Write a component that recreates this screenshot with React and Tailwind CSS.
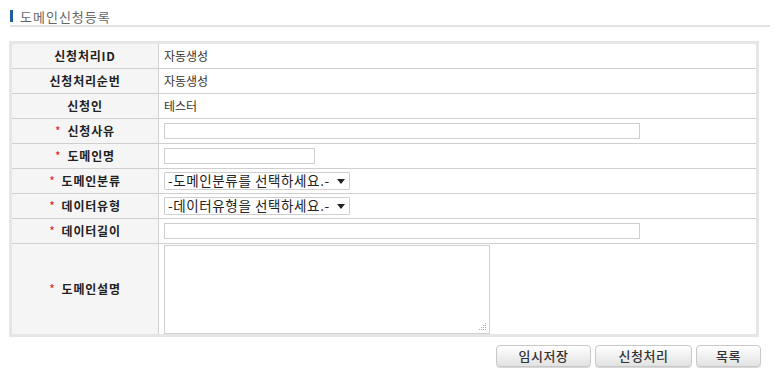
import React from "react";

const font = { fontFamily: '"Noto Sans CJK KR", "Noto Sans", sans-serif' };

function Row({ label, req, children, tall, last }) {
  return (
    <div className={`flex ${last ? "" : "border-b border-[#cfcfcf]"} ${tall ? "h-[90px]" : "h-[25px]"}`}>
      <div className="w-[147px] shrink-0 bg-[#f5f5f5] border-r border-[#cfcfcf] flex items-center justify-center text-[12px] font-bold text-[#222] tracking-[0.8px]">
        {req && <span className="text-[#e02020] mr-[6px] font-normal">*</span>}
        {label}
      </div>
      <div className={`flex-1 flex ${tall ? "items-start pt-[1px]" : "items-center"} pl-[5px] text-[12px] text-[#333]`}>
        {children}
      </div>
    </div>
  );
}

function Select({ text }) {
  return (
    <div className="w-[186px] h-[18px] border border-[#cfcfcf] bg-white flex items-center justify-between pl-[3px] pr-[4px] text-[13.5px] text-[#222] rounded-[1px] tracking-[0.6px]">
      <span className="leading-none whitespace-nowrap">{text}</span>
      <svg width="8" height="5" viewBox="0 0 8 5"><path d="M0 0h8L4 5z" fill="#222" /></svg>
    </div>
  );
}

function Btn({ children, w }) {
  return (
    <div className={`${w} h-[22px] rounded-[4px] border border-[#c8c8c8] bg-gradient-to-b from-white to-[#e2e2e2] flex items-center justify-center text-[13px] font-medium text-[#333] tracking-[0.5px] shadow-[0_1px_0_#d8d8d8]`}>
      {children}
    </div>
  );
}

export default function App() {
  return (
    <div className="w-[781px] h-[375px] bg-white relative" style={font}>
      <div className="pt-[9px] pl-[10px] pr-[11px]">
        <div className="flex items-center h-[14px]">
          <div className="w-[3px] h-[12px] bg-[#1f5f9f]" />
          <span className="ml-[7px] text-[13px] text-[#666] leading-none tracking-[1px]">도메인신청등록</span>
        </div>
        <div className="mt-[2px] h-[2px] bg-[#e2e2e2]" />
      </div>
      <div className="ml-[9px] mt-[14px] w-[750px] border-[3px] border-[#e6e6e6]">
        <Row label="신청처리ID">자동생성</Row>
        <Row label="신청처리순번">자동생성</Row>
        <Row label="신청인">테스터</Row>
        <Row label="신청사유" req>
          <div className="w-[476px] h-[16px] border border-[#cfcfcf] bg-white" />
        </Row>
        <Row label="도메인명" req>
          <div className="w-[151px] h-[16px] border border-[#cfcfcf] bg-white" />
        </Row>
        <Row label="도메인분류" req>
          <Select text="-도메인분류를 선택하세요.-" />
        </Row>
        <Row label="데이터유형" req>
          <Select text="-데이터유형을 선택하세요.-" />
        </Row>
        <Row label="데이터길이" req>
          <div className="w-[476px] h-[16px] border border-[#cfcfcf] bg-white" />
        </Row>
        <Row label="도메인설명" req tall last>
          <div className="w-[326px] h-[89px] border border-[#cfcfcf] bg-white relative">
            <svg className="absolute right-[2px] bottom-[2px]" width="8" height="8" viewBox="0 0 8 8">
              <rect x="6" y="0" width="1" height="1" fill="#aaa" />
              <rect x="4" y="2" width="1" height="1" fill="#aaa" />
              <rect x="6" y="2" width="1" height="1" fill="#aaa" />
              <rect x="2" y="4" width="1" height="1" fill="#aaa" />
              <rect x="4" y="4" width="1" height="1" fill="#aaa" />
              <rect x="6" y="4" width="1" height="1" fill="#aaa" />
              <rect x="0" y="6" width="1" height="1" fill="#aaa" />
              <rect x="2" y="6" width="1" height="1" fill="#aaa" />
              <rect x="4" y="6" width="1" height="1" fill="#aaa" />
              <rect x="6" y="6" width="1" height="1" fill="#aaa" />
            </svg>
          </div>
        </Row>
      </div>
      <div className="flex justify-end gap-[4px] mt-[8px] pr-[20px]">
        <Btn w="w-[95px]">임시저장</Btn>
        <Btn w="w-[97px]">신청처리</Btn>
        <Btn w="w-[65px]">목록</Btn>
      </div>
    </div>
  );
}
